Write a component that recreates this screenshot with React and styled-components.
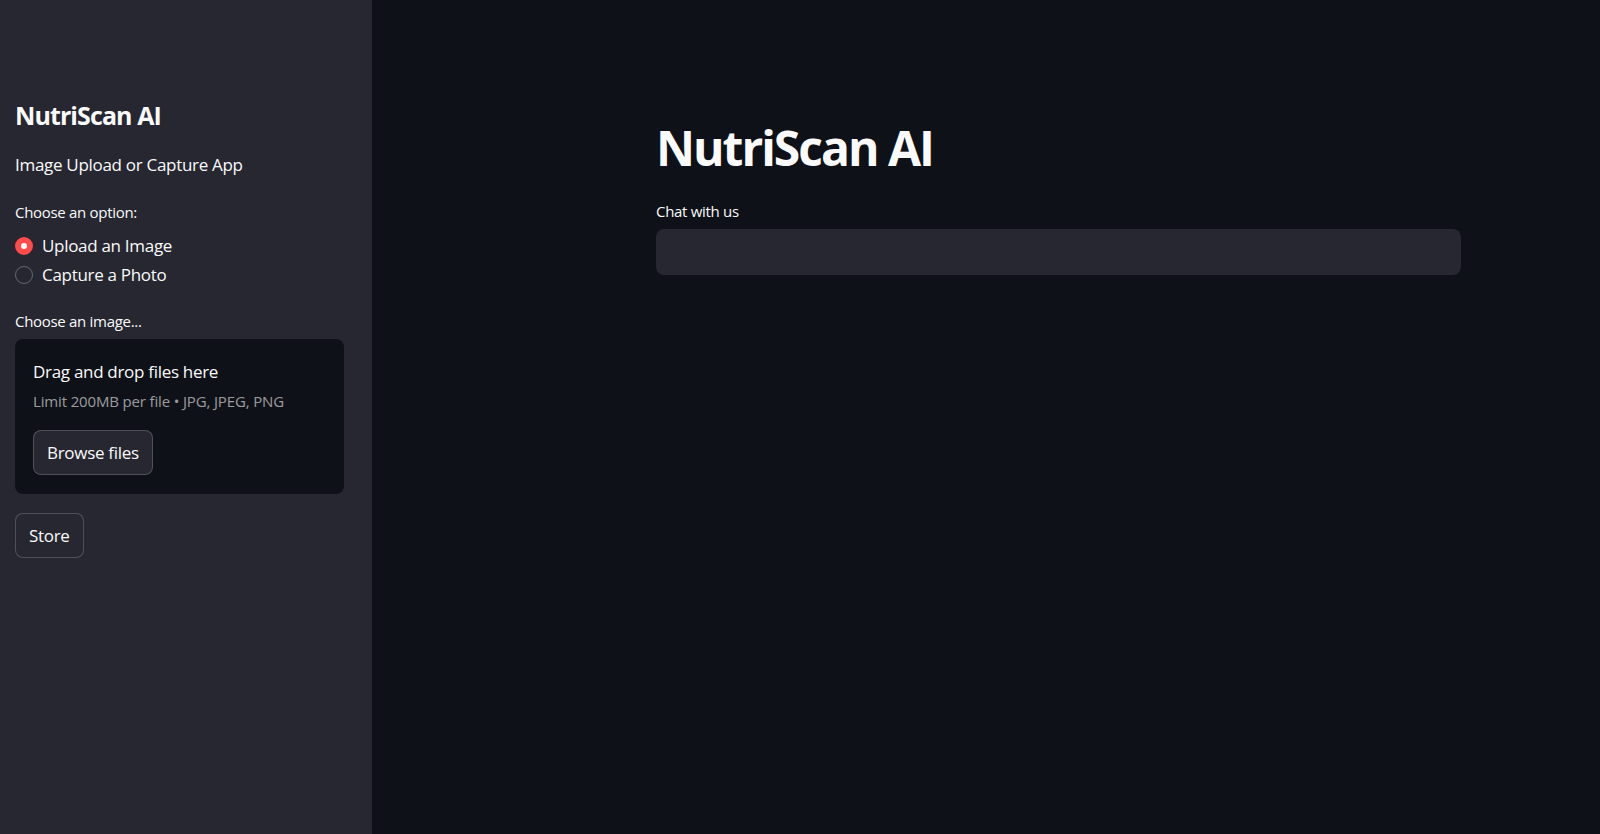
import React, { useState } from 'react';
import styled, { createGlobalStyle, css } from 'styled-components';

const GlobalStyle = createGlobalStyle`
  html, body, #root {
    margin: 0;
    padding: 0;
    height: 100%;
  }
  body {
    font-family: "Open Sans", "Noto Sans", sans-serif;
    color: #fafafa;
    background: #0e1117;
  }
  * {
    box-sizing: border-box;
  }
`;

const StyledApp = styled.div`
  display: flex;
  height: 100vh;
  overflow: hidden;
`;

const StyledSidebar = styled.aside`
  width: 372px;
  flex-shrink: 0;
  background-color: #262730;
  padding: 98px 28px 0 15px;
  display: flex;
  flex-direction: column;
`;

const SidebarTitle = styled.h2`
  margin: 0;
  font-size: 25px;
  font-weight: 700;
  line-height: 34px;
  letter-spacing: -0.9px;
`;

const SidebarText = styled.p`
  margin: 21px 0 0;
  font-size: 17px;
  line-height: 24px;
  letter-spacing: -0.3px;
`;

const Label = styled.div`
  font-size: 15px;
  line-height: 20px;
  letter-spacing: -0.3px;
  color: #fafafa;
  margin-top: ${({ top }) => top || 0}px;
`;

const RadioGroup = styled.div`
  display: flex;
  flex-direction: column;
  gap: 5px;
  margin-top: 12px;
`;

const RadioRow = styled.label`
  display: flex;
  align-items: center;
  gap: 9px;
  font-size: 17px;
  line-height: 24px;
  letter-spacing: -0.3px;
  cursor: pointer;
`;

const RadioDot = styled.span`
  width: 18px;
  height: 18px;
  border-radius: 50%;
  flex-shrink: 0;
  ${({ checked }) =>
    checked
      ? css`
          border: 6px solid #ff4b4b;
          background: #fff;
        `
      : css`
          border: 1px solid rgba(250, 250, 250, 0.3);
          background: transparent;
        `};
`;

const Dropzone = styled.div`
  margin-top: 8px;
  background-color: #0e1117;
  border-radius: 8px;
  padding: 21px 18px 19px;
  display: flex;
  flex-direction: column;
`;

const DropTitle = styled.div`
  font-size: 17px;
  line-height: 24px;
  letter-spacing: -0.3px;
`;

const DropHint = styled.div`
  font-size: 15px;
  line-height: 20px;
  letter-spacing: -0.15px;
  color: rgba(250, 250, 250, 0.6);
  margin-top: 7px;
`;

const Button = styled.button`
  align-self: flex-start;
  font-family: inherit;
  font-size: 17px;
  letter-spacing: -0.3px;
  color: #fafafa;
  background-color: #262730;
  border: 1px solid rgba(250, 250, 250, 0.2);
  border-radius: 8px;
  height: 45px;
  padding: 0 13px;
  margin-top: ${({ top }) => top || 0}px;
  cursor: pointer;
`;

const StyledMain = styled.main`
  flex: 1;
  padding: 116px 0 0 284px;
`;

const MainContent = styled.div`
  width: 805px;
  display: flex;
  flex-direction: column;
`;

const Title = styled.h1`
  margin: 0;
  font-size: 48px;
  font-weight: 700;
  line-height: 64px;
  letter-spacing: -2px;
`;

const ChatInput = styled.input`
  margin-top: 8px;
  height: 46px;
  width: 100%;
  border: none;
  outline: none;
  border-radius: 8px;
  background-color: #262730;
  color: #fafafa;
  font-family: inherit;
  font-size: 16px;
  padding: 0 14px;
`;

const options = ['Upload an Image', 'Capture a Photo'];

const App = () => {
  const [choice, setChoice] = useState(options[0]);
  return (
    <>
      <GlobalStyle />
      <StyledApp>
        <StyledSidebar>
          <SidebarTitle>NutriScan AI</SidebarTitle>
          <SidebarText>Image Upload or Capture App</SidebarText>
          <Label top={25}>Choose an option:</Label>
          <RadioGroup>
            {options.map((opt) => (
              <RadioRow key={opt} onClick={() => setChoice(opt)}>
                <RadioDot checked={choice === opt} />
                {opt}
              </RadioRow>
            ))}
          </RadioGroup>
          <Label top={24}>Choose an image...</Label>
          <Dropzone>
            <DropTitle>Drag and drop files here</DropTitle>
            <DropHint>Limit 200MB per file • JPG, JPEG, PNG</DropHint>
            <Button top={19}>Browse files</Button>
          </Dropzone>
          <Button top={19}>Store</Button>
        </StyledSidebar>
        <StyledMain>
          <MainContent>
            <Title>NutriScan AI</Title>
            <Label top={21}>Chat with us</Label>
            <ChatInput />
          </MainContent>
        </StyledMain>
      </StyledApp>
    </>
  );
};

export default App;
